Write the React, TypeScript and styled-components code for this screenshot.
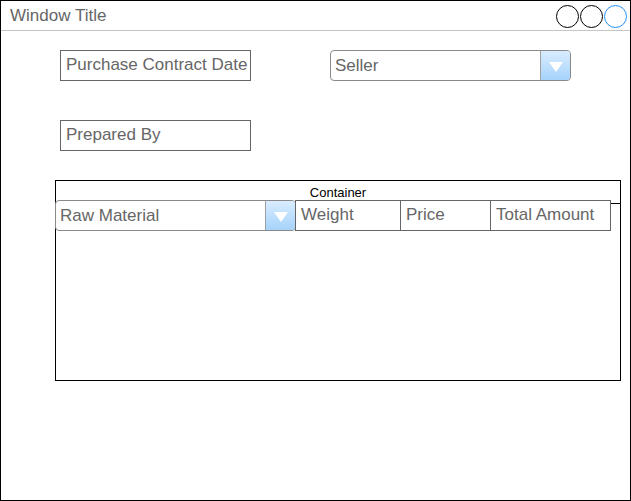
import React from "react";
import styled, { createGlobalStyle } from "styled-components";

const Global = createGlobalStyle`
  html, body { margin: 0; padding: 0; background: #fff; }
  body { font-family: "Liberation Sans", Arial, sans-serif; }
  * { box-sizing: border-box; }
`;

const Window = styled.div`
  width: 631px;
  height: 501px;
  border: 1px solid #000;
  background: #fff;
  display: flex;
  flex-direction: column;
`;

const TitleBar = styled.div`
  height: 30px;
  border-bottom: 1px solid #c4c4c4;
  display: flex;
  align-items: center;
  justify-content: space-between;
  padding: 0 3px 0 9px;
`;

const Title = styled.span`
  font-size: 17px;
  color: #666;
`;

const Controls = styled.div`
  display: flex;
  gap: 1px;
  margin-top: 1px;
`;

const Circle = styled.span<{ $blue?: boolean }>`
  width: 23px;
  height: 23px;
  border-radius: 50%;
  border: 1px solid ${(p) => (p.$blue ? "#1e90ff" : "#000")};
  display: block;
`;

const Body = styled.div`
  padding: 19px 0 0 54px;
  display: flex;
  flex-direction: column;
`;

const Row = styled.div<{ $gap?: number; $mb?: number }>`
  display: flex;
  gap: ${(p) => p.$gap ?? 0}px;
  margin-bottom: ${(p) => p.$mb ?? 0}px;
`;

const TextField = styled.div<{ $w: number; $indent?: number }>`
  width: ${(p) => p.$w}px;
  height: 31px;
  margin-left: ${(p) => p.$indent ?? 0}px;
  border: 1px solid #666;
  background: #fff;
  color: #666;
  font-size: 17px;
  display: flex;
  align-items: center;
  padding-left: 5px;
  padding-bottom: 1px;
  white-space: nowrap;
  overflow: hidden;
`;

const Select = styled.div<{ $w: number; $indent?: number }>`
  width: ${(p) => p.$w}px;
  height: 31px;
  margin-left: ${(p) => p.$indent ?? 0}px;
  border: 1px solid #8a8a8a;
  border-radius: 4px;
  background: #fff;
  display: flex;
  overflow: hidden;
`;

const SelectText = styled.span`
  flex: 1;
  color: #666;
  font-size: 17px;
  display: flex;
  align-items: center;
  padding-left: 4px;
`;

const SelectButton = styled.span`
  width: 30px;
  border-left: 1px solid #a0a0a0;
  background: linear-gradient(#d9ecff, #a6d3fb);
  display: flex;
  align-items: center;
  justify-content: center;
`;

const Arrow = styled.span`
  width: 0;
  height: 0;
  border-left: 7px solid transparent;
  border-right: 7px solid transparent;
  border-top: 10px solid #fff;
  margin-top: 2px;
`;

const Container = styled.div`
  width: 566px;
  height: 201px;
  border: 1px solid #000;
  display: flex;
  flex-direction: column;
`;

const ContainerHeader = styled.div`
  height: 23px;
  border-bottom: 1px solid #000;
  font-size: 13px;
  color: #000;
  text-align: center;
  padding-top: 4px;
`;

const TableRow = styled.div`
  display: flex;
  margin: -4px 0 0 -1px;
`;

const Cell = styled.div<{ $w: number }>`
  width: ${(p) => p.$w}px;
  height: 31px;
  margin-left: -1px;
  border: 1px solid #666;
  background: #fff;
  color: #666;
  font-size: 17px;
  display: flex;
  align-items: center;
  padding-left: 5px;
  padding-bottom: 1px;
  white-space: nowrap;
`;

export default function App() {
  return (
    <>
      <Global />
      <Window>
        <TitleBar>
          <Title>Window Title</Title>
          <Controls>
            <Circle />
            <Circle />
            <Circle $blue />
          </Controls>
        </TitleBar>
        <Body>
          <Row $gap={79} $mb={39}>
            <TextField $w={191} $indent={5}>Purchase Contract Date</TextField>
            <Select $w={241}>
              <SelectText>Seller</SelectText>
              <SelectButton>
                <Arrow />
              </SelectButton>
            </Select>
          </Row>
          <Row $mb={29}>
            <TextField $w={191} $indent={5}>Prepared By</TextField>
          </Row>
          <Container>
            <ContainerHeader>Container</ContainerHeader>
            <TableRow>
              <Select $w={241}>
                <SelectText>Raw Material</SelectText>
                <SelectButton>
                  <Arrow />
                </SelectButton>
              </Select>
              <Cell $w={106}>Weight</Cell>
              <Cell $w={91}>Price</Cell>
              <Cell $w={121}>Total Amount</Cell>
            </TableRow>
          </Container>
        </Body>
      </Window>
    </>
  );
}
